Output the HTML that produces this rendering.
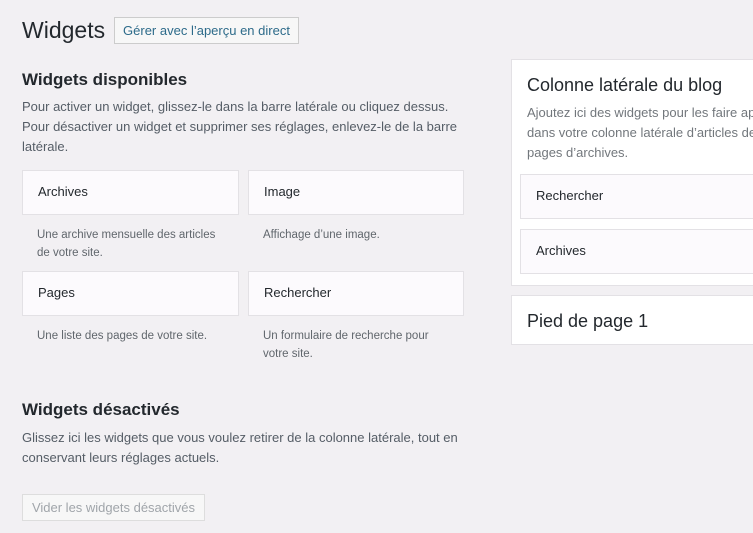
<!DOCTYPE html>
<html><head><meta charset="utf-8"><style>
*{box-sizing:border-box;margin:0;padding:0}
html,body{width:753px;height:533px;overflow:hidden}
body{background:#f2f0f3;font-family:"Liberation Sans",sans-serif;color:#23282d;position:relative}
.a{position:absolute;white-space:nowrap}
.h1{font-size:23px;left:22px;top:17px;color:#23282d}
.btn{left:114px;top:17px;width:185px;height:27px;border:1px solid #ccc;background:#f7f7f7;color:#2d6b8a;font-size:13px;line-height:25px;text-align:center}
.h2{font-size:17px;font-weight:bold;color:#23282d}
.p{font-size:13px;line-height:20px;color:#555d66}
.w{position:absolute;background:#fcfafd;border:1px solid #e3e1e5;font-size:13px;color:#23282d;padding-left:15px;line-height:42px;overflow:hidden;white-space:nowrap}
.d{font-size:11.5px;line-height:18px;color:#60666c}
.panel{position:absolute;background:#fff;border:1px solid #e3e1e5;border-right:none;overflow:hidden}
</style></head><body>
<div class="a h1">Widgets</div>
<div class="a btn">Gérer avec l’aperçu en direct</div>
<div class="a h2" style="left:22px;top:70px">Widgets disponibles</div>
<div class="a p" style="left:22px;top:97px">Pour activer un widget, glissez-le dans la barre latérale ou cliquez dessus.<br>Pour désactiver un widget et supprimer ses réglages, enlevez-le de la barre<br>latérale.</div>
<div class="w" style="left:22px;top:170px;width:217px;height:45px">Archives</div>
<div class="w" style="left:248px;top:170px;width:216px;height:45px">Image</div>
<div class="a d" style="left:37px;top:226px">Une archive mensuelle des articles<br>de votre site.</div>
<div class="a d" style="left:263px;top:226px">Affichage d’une image.</div>
<div class="w" style="left:22px;top:271px;width:217px;height:45px">Pages</div>
<div class="w" style="left:248px;top:271px;width:216px;height:45px">Rechercher</div>
<div class="a d" style="left:37px;top:327px">Une liste des pages de votre site.</div>
<div class="a d" style="left:263px;top:327px">Un formulaire de recherche pour<br>votre site.</div>
<div class="a h2" style="left:22px;top:400px">Widgets désactivés</div>
<div class="a p" style="left:22px;top:428px">Glissez ici les widgets que vous voulez retirer de la colonne latérale, tout en<br>conservant leurs réglages actuels.</div>
<div class="a" style="left:22px;top:494px;width:183px;height:27px;border:1px solid #ddd;background:#f7f7f7;color:#a0a5aa;font-size:13px;line-height:25px;text-align:center">Vider les widgets désactivés</div>
<div class="panel" style="left:511px;top:59px;width:242px;height:227px">
<div class="a" style="left:15px;top:15px;font-size:18px;color:#23282d">Colonne latérale du blog</div>
<div class="a p" style="left:15px;top:43px;color:#72777c">Ajoutez ici des widgets pour les faire apparaître<br>dans votre colonne latérale d’articles de blog<br>pages d’archives.</div>
<div class="w" style="left:8px;top:114px;width:240px;height:45px">Rechercher</div>
<div class="w" style="left:8px;top:169px;width:240px;height:45px">Archives</div>
</div>
<div class="panel" style="left:511px;top:295px;width:242px;height:50px">
<div class="a" style="left:15px;top:15px;font-size:18px;color:#23282d">Pied de page 1</div>
</div>
</body></html>
